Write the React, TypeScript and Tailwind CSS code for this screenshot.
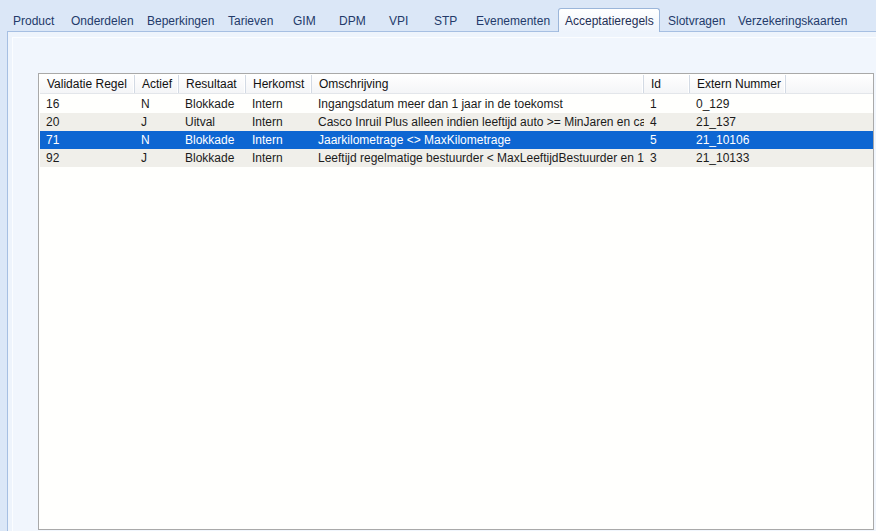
import React from "react";

const tabs: { label: string; w: number; pl: number }[] = [
  { label: "Product", w: 58, pl: 6 },
  { label: "Onderdelen", w: 76, pl: 6 },
  { label: "Beperkingen", w: 81, pl: 6 },
  { label: "Tarieven", w: 65, pl: 6 },
  { label: "GIM", w: 46, pl: 6 },
  { label: "DPM", w: 50, pl: 6 },
  { label: "VPI", w: 45, pl: 6 },
  { label: "STP", w: 42, pl: 6 },
  { label: "Evenementen", w: 88, pl: 6 },
  { label: "Acceptatieregels", w: 102, pl: 6 },
  { label: "Slotvragen", w: 70, pl: 8 },
  { label: "Verzekeringskaarten", w: 124, pl: 8 },
];

const cols: { label: string; w: number }[] = [
  { label: "Validatie Regel", w: 95 },
  { label: "Actief", w: 44 },
  { label: "Resultaat", w: 67 },
  { label: "Herkomst", w: 66 },
  { label: "Omschrijving", w: 332 },
  { label: "Id", w: 46 },
  { label: "Extern Nummer", w: 96 },
];

const rows: string[][] = [
  ["16", "N", "Blokkade", "Intern", "Ingangsdatum meer dan 1 jaar in de toekomst", "1", "0_129"],
  ["20", "J", "Uitval", "Intern", "Casco Inruil Plus alleen indien leeftijd auto >= MinJaren en casco", "4", "21_137"],
  ["71", "N", "Blokkade", "Intern", "Jaarkilometrage <> MaxKilometrage", "5", "21_10106"],
  ["92", "J", "Blokkade", "Intern", "Leeftijd regelmatige bestuurder < MaxLeeftijdBestuurder en 18", "3", "21_10133"],
];

export default function App() {
  return (
    <div
      className="w-[876px] h-[531px] overflow-hidden bg-[#dbe7f7] flex flex-col text-[12px] text-[#1b1b1b]"
      style={{ fontFamily: '"Liberation Sans", Arial, sans-serif' }}
    >
      {/* tab strip */}
      <div className="h-[31px] flex items-end pl-[7px] shrink-0">
        {tabs.map((t) => {
          const active = t.label === "Acceptatieregels";
          return active ? (
            <div
              key={t.label}
              className="h-[24px] mb-[-1px] relative z-10 flex items-start pt-[3px] border border-b-0 border-[#9bb6da] rounded-t-[3px] bg-gradient-to-b from-[#ffffff] to-[#eef4fc] text-[#1f2f55] whitespace-nowrap"
              style={{ width: t.w, paddingLeft: t.pl }}
            >
              {t.label}
            </div>
          ) : (
            <div
              key={t.label}
              className="h-[21px] flex items-center text-[#233a6a] whitespace-nowrap"
              style={{ width: t.w, paddingLeft: t.pl }}
            >
              {t.label}
            </div>
          );
        })}
      </div>

      {/* tab panel */}
      <div className="flex-1 ml-[7px] border-l border-t border-[#a6bfe2] bg-[#eef4fc] pl-[4px] pt-[5px] flex flex-col">
        <div className="flex-1 border-l border-t border-[#fbfdff] bg-[#f1f6fd] pl-[25px] pt-[35px] flex flex-col">
          <div className="flex-1 mr-[2px] mb-[1px] border border-[#a9a9a9] bg-[#fffffd] pt-[1px] pl-[1px] flex flex-col">
            {/* header */}
            <div className="h-[19px] flex bg-gradient-to-b from-[#ffffff] to-[#f4f5f7] border-b border-[#e3e6ea]">
              {cols.map((c) => (
                <div
                  key={c.label}
                  className="h-full flex items-center pl-[7px] border-r border-[#d3dae4] shadow-[inset_-1px_0_0_#ffffff] whitespace-nowrap overflow-hidden text-[#111]"
                  style={{ width: c.w }}
                >
                  {c.label}
                </div>
              ))}
              <div className="flex-1" />
            </div>
            <div className="h-[1px]" />
            {/* rows */}
            {rows.map((r, i) => {
              const sel = i === 2;
              const bg = sel ? "bg-[#0d66d2] text-white" : i % 2 === 1 ? "bg-[#f0efea]" : "bg-[#fffffd]";
              return (
                <div key={i} className={`h-[18px] flex ${bg}`}>
                  {r.map((v, j) => (
                    <div
                      key={j}
                      className="h-full flex items-center pl-[6px] whitespace-nowrap overflow-hidden"
                      style={{ width: cols[j].w }}
                    >
                      {v}
                    </div>
                  ))}
                  <div className="flex-1" />
                </div>
              );
            })}
          </div>
        </div>
      </div>
    </div>
  );
}
